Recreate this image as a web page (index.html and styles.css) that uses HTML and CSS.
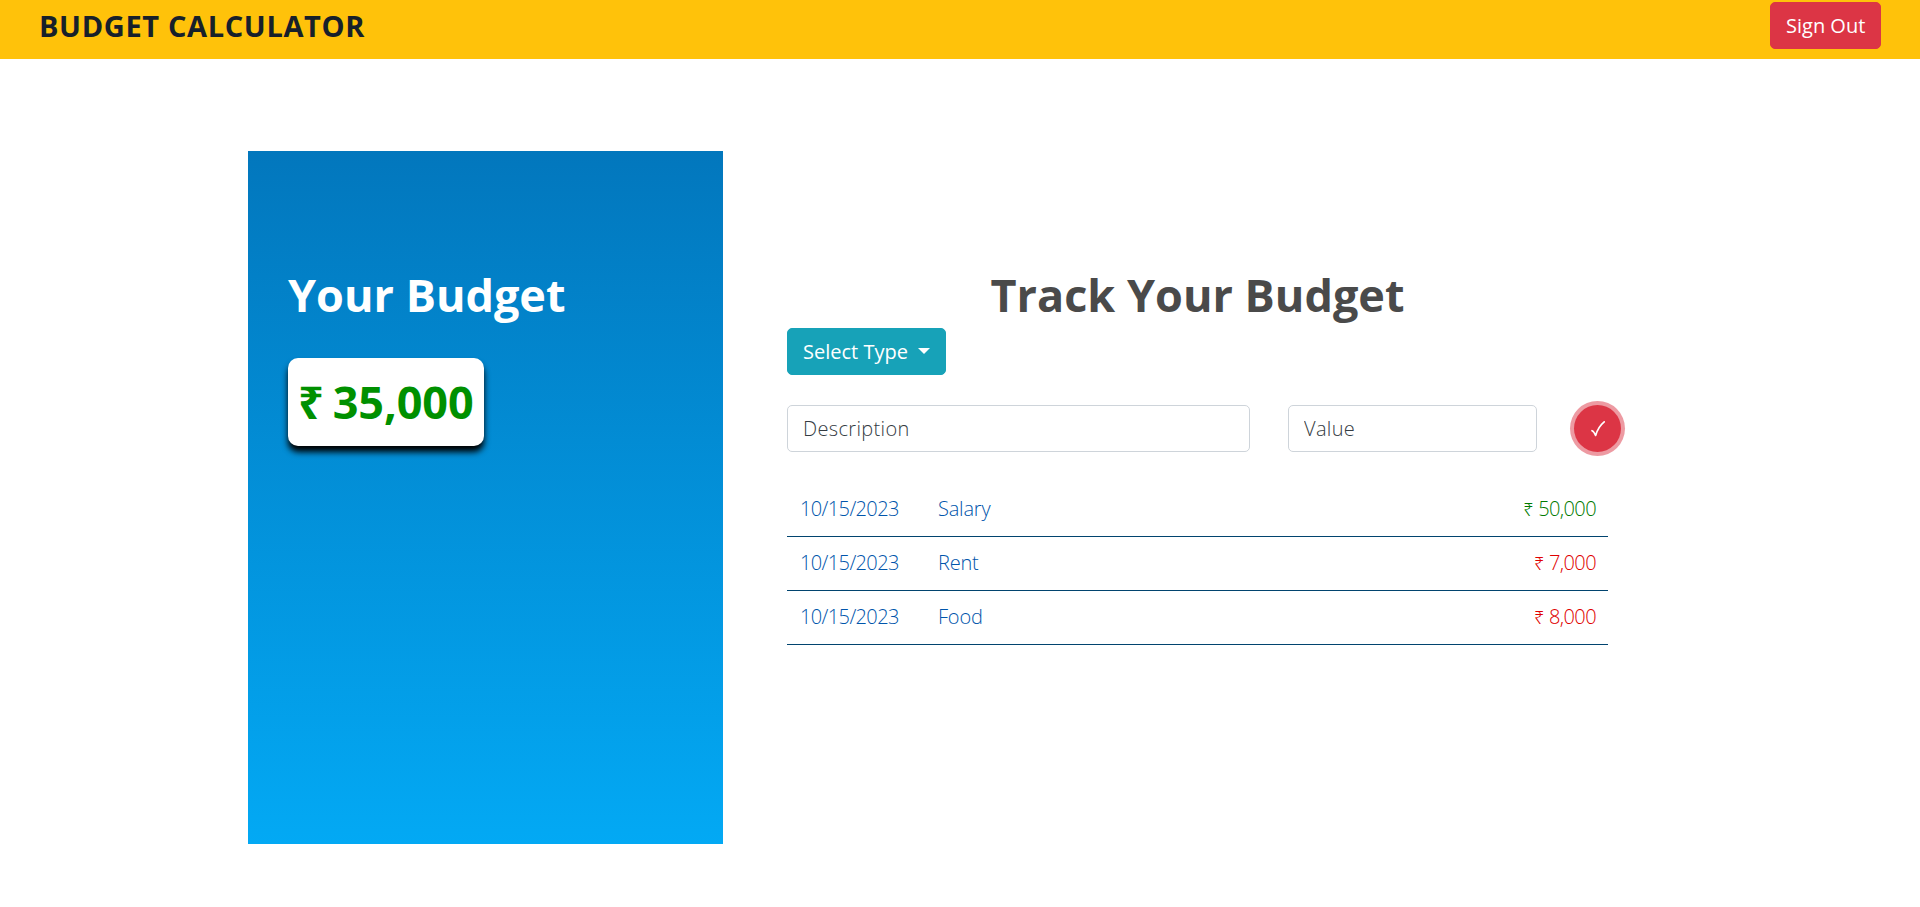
FILE: index.html
```html
<!DOCTYPE html>
<html lang="en">
<head>
<meta charset="utf-8">
<title>Budget Calculator</title>
<link rel="stylesheet" href="styles.css">
</head>
<body>
<header class="navbar">
  <div class="brand">BUDGET CALCULATOR</div>
  <button class="btn btn-danger">Sign Out</button>
</header>
<main class="content">
  <section class="summary">
    <h2 class="summary-title">Your Budget</h2>
    <div class="balance">₹ 35,000</div>
  </section>
  <section class="tracker">
    <h2 class="tracker-title">Track Your Budget</h2>
    <button class="btn btn-info">Select Type<span class="caret"></span></button>
    <form class="entry">
      <input class="field field-description" type="text" placeholder="Description">
      <input class="field field-value" type="text" placeholder="Value">
      <button class="submit" type="button" aria-label="Add">
        <svg class="check" viewBox="0 0 14 16"><path d="M1 9.7C2.5 10.2 3.6 12 4.6 14.4C6.300 9 9.400 4 13.200 0.900" /></svg>
      </button>
    </form>
    <div class="list">
      <div class="row"><span class="date">10/15/2023</span><span class="name">Salary</span><span class="amount income"><span class="rupee">₹</span> 50,000</span></div>
      <div class="row"><span class="date">10/15/2023</span><span class="name">Rent</span><span class="amount expense"><span class="rupee">₹</span> 7,000</span></div>
      <div class="row"><span class="date">10/15/2023</span><span class="name">Food</span><span class="amount expense"><span class="rupee">₹</span> 8,000</span></div>
    </div>
  </section>
</main>
</body>
</html>
```
FILE: styles.css
```css
* { box-sizing: border-box; }
body {
  margin: 0;
  background: #fff;
  font-family: "Open Sans", "Noto Sans", sans-serif;
  font-size: 20px;
  font-weight: 300;
  line-height: 1.5;
}
h2 { margin: 0; font-size: 45px; line-height: 54px; font-weight: 700; white-space: nowrap; }
.navbar {
  display: flex;
  justify-content: space-between;
  align-items: flex-start;
  height: 59px;
  padding: 2px 39px 0 39px;
  background: #ffc20a;
}
.brand {
  padding-top: 3px;
  font-size: 29px;
  line-height: 42px;
  font-weight: 700;
  letter-spacing: 0.64px;
  color: #17202a;
  white-space: nowrap;
}
.btn {
  display: flex;
  align-items: center;
  height: 47px;
  padding: 0 15px;
  border: 1px solid;
  border-radius: 5px;
  font: 400 20px/30px "Open Sans", sans-serif;
  color: #fff;
  white-space: nowrap;
}
.btn-danger { width: 111px; background: #dc3545; border-color: #dc3545; }
.btn-info { width: 159px; background: #17a2b8; border-color: #17a2b8; }
.caret {
  margin: -1px 0 0 10px;
  border-top: 6px solid #fff;
  border-left: 6px solid transparent;
  border-right: 6px solid transparent;
}
.content { display: flex; padding: 92px 0 0 248px; }
.summary {
  width: 475px;
  height: 693px;
  padding: 117px 40px 0;
  background: linear-gradient(#0277bd, #03a9f4);
}
.summary-title { color: #fff; }
.balance {
  display: flex;
  align-items: center;
  width: 196px;
  height: 88px;
  margin-top: 36px;
  padding: 0 10px;
  border-radius: 10px;
  background: #fff;
  box-shadow: 0 6px 6px #000;
  font-size: 45px;
  font-weight: 700;
  letter-spacing: -0.1px;
  word-spacing: -2.5px;
  color: #009000;
  white-space: nowrap;
}
.tracker { width: 834px; margin-left: 64px; padding-top: 117px; }
.tracker-title { width: 821px; text-align: center; color: #4a4a4a; margin-bottom: 6px; }
.entry { display: flex; margin-top: 30px; }
.field {
  height: 47px;
  padding: 0 15px;
  border: 1px solid #ced4da;
  border-radius: 5px;
  font: 300 20px/30px "Open Sans", sans-serif;
  letter-spacing: 0.35px;
}
.field::placeholder { color: #343b42; opacity: 1; }
.field-description { width: 463px; margin-right: 38px; }
.field-value { width: 249px; margin-right: 37px; }
.submit {
  display: flex;
  align-items: center;
  justify-content: center;
  width: 47px;
  height: 47px;
  padding: 0;
  border: 0;
  border-radius: 50%;
  background: #dc3545;
  box-shadow: 0 0 0 4px rgba(220, 53, 69, .5);
}
.check { width: 14px; height: 16px; fill: none; stroke: #fff; stroke-width: 1.7; stroke-linecap: round; stroke-linejoin: round; }
.list { width: 821px; margin-top: 31px; color: #0055ab; font-weight: 300; }
.row {
  display: flex;
  align-items: center;
  height: 54px;
  padding: 0 12px 1px 13px;
  border-bottom: 1px solid #01446f;
}
.date { width: 138px; letter-spacing: -0.62px; }
.name { letter-spacing: -0.2px; }
.amount { margin-left: auto; letter-spacing: -0.6px; word-spacing: 1px; }
.rupee { font-size: 17px; }
.income { color: #007a00; }
.expense { color: #e00000; }
```
